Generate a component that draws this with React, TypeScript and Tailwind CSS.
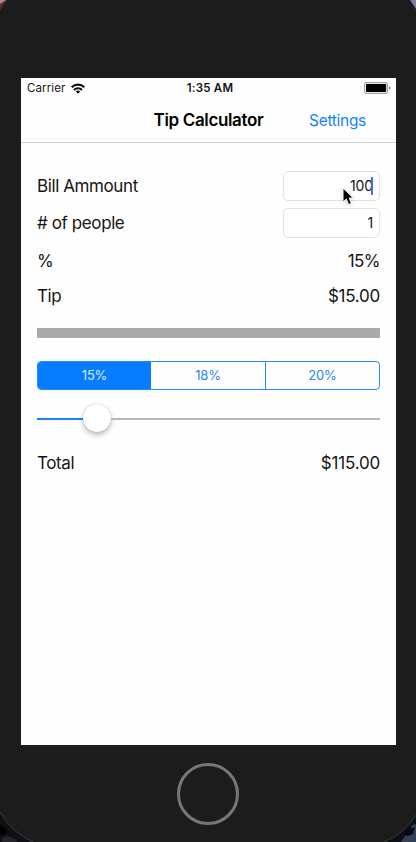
import React from 'react';

function Backdrop() {
  return (
    <svg className="pointer-events-none absolute inset-0" width="416" height="842" viewBox="0 0 416 842" fill="none">
      <path d="M0 0H7Q3 4 0 11Z" fill="#55302f" />
      <path d="M0 0H6L0 4Z" fill="#b98288" />
      <path d="M410 0H416V9Z" fill="#85799a" />
      <path d="M0 812Q12 833 33 842H0Z" fill="#101014" />
      <path d="M0 825l5 2 2 5-4 4-3-2Z" fill="#020203" />
      <path d="M2 838l6-2 7 3 2 3H2Z" fill="#25262b" />
      <path d="M0 812Q12 833 33 842" stroke="#3d3d3f" />
      <path d="M416 815Q404 834 384 842H416Z" fill="#0c0f18" />
      <path d="M416 824l-4 1-2 7-6 5-3 5H416Z" fill="#344058" />
      <path d="M407 826l3 3 5-2-2 7-5 2-4-2Z" fill="#080b12" />
      <path d="M416 815Q404 834 384 842" stroke="#3d3d3f" />
    </svg>
  );
}

function WifiIcon() {
  return (
    <svg width="14" height="11" viewBox="0 0 14 11" fill="none" stroke="#080808" strokeWidth="2.1">
      <path d="M0.7 4.2C4.2 0.7 9.8 0.7 13.3 4.2" />
      <path d="M3 6.9C5.2 4.7 8.8 4.7 11 6.9" />
      <path d="M7 10.7L4.8 8.5Q7 6.6 9.2 8.5Z" fill="#080808" stroke="none" />
    </svg>
  );
}

function BatteryIcon() {
  return (
    <svg width="27" height="12" viewBox="0 0 27 12" fill="none">
      <rect x="0.6" y="0.6" width="23" height="10.8" rx="2.4" stroke="#a2a2a2" strokeWidth="1.1" />
      <rect x="2" y="2" width="20.2" height="8" rx="0.8" fill="#000" />
      <path d="M25 4.1Q26.6 4.8 26.6 6T25 7.9Z" fill="#8c8c8c" />
    </svg>
  );
}

function Pointer() {
  return (
    <svg className="absolute left-[58px] top-[15px] overflow-visible drop-shadow-sm" width="13" height="19" viewBox="0 0 13 19">
      <path d="M1 1V15L4.3 12.1L6.6 17.6L9.4 16.4L7.2 11H11.4Z" fill="#000" stroke="#fff" strokeWidth="1" />
    </svg>
  );
}

function Field({ value, children }: { value: string; children?: React.ReactNode }) {
  return (
    <div className="relative flex h-[30px] w-[97px] items-center justify-end rounded-[5px] border border-[#e2e2e2] bg-white pb-[2px] pr-[6px] text-[14px] tracking-[-0.1px]">
      <span>{value}</span>
      {children}
    </div>
  );
}

function Row({ label, children, className }: { label: string; children: React.ReactNode; className: string }) {
  return (
    <div className={`flex items-center justify-between ${className}`}>
      <span className="pt-[2px]">{label}</span>
      {children}
    </div>
  );
}

export default function App() {
  return (
    <div className="relative h-[842px] w-[416px] overflow-hidden bg-[#1c1c1c] pl-[21px] pt-[78px] font-['Inter','Liberation_Sans',sans-serif] text-[#151515]">
      <Backdrop />
      <div className="h-[667px] w-[375px] bg-[#fefefe]">
        <div className="grid h-5 grid-cols-3 items-center pl-[6px] pr-[5px] text-[12px] leading-5">
          <div className="flex items-center gap-[6px]">
            <span className="text-[11.5px] tracking-[0.1px]">Carrier</span>
            <WifiIcon />
          </div>
          <span className="pl-[2px] text-center text-[11.5px] font-semibold tracking-[0.25px]">1:35 AM</span>
          <div className="flex justify-end"><BatteryIcon /></div>
        </div>
        <div className="grid h-[45px] grid-cols-[1fr_auto_1fr] items-center border-b border-[#cccccc] pt-px">
          <span />
          <h1 className="text-[17px] font-semibold tracking-[-0.35px] text-black">Tip Calculator</h1>
          <button className="justify-self-end pr-[30px] text-[15.5px] tracking-[-0.3px] text-[#1683fd]">Settings</button>
        </div>

        <div className="flex flex-col px-4 pt-7 text-[17px] tracking-[-0.4px]">
          <Row label="Bill Ammount" className="h-[30px]">
            <Field value="100">
              <span className="absolute right-[6px] top-[5px] h-[18px] w-[2px] bg-[#426bf2]" />
              <Pointer />
            </Field>
          </Row>
          <Row label="# of people" className="mt-[7px] h-[30px]"><Field value="1" /></Row>
          <Row label="%" className="mt-[13px] h-5"><span className="pt-[2px] tracking-[-0.55px]">15%</span></Row>
          <Row label="Tip" className="mt-[15px] h-5"><span className="pt-[2px] tracking-[-0.25px]">$15.00</span></Row>
          <div className="mt-[22px] h-[10px] bg-[#aaaaaa]" />
          <div className="mt-[23px] grid h-[29px] grid-cols-[113px_114px_114px] overflow-hidden rounded-[4px] border border-[#2989f8] text-[13px] tracking-[-0.2px] text-[#2487fb]">
            <span className="flex items-center justify-center bg-[#067cff] text-[#d9ebff]">15%</span>
            <span className="flex items-center justify-center">18%</span>
            <span className="flex items-center justify-center border-l border-[#2989f8]">20%</span>
          </div>
          <div className="mt-[14px] flex h-7 items-center">
            <div className="mt-[2px] h-[2px] w-[46px] bg-[#1683fd]" />
            <div className="h-7 w-7 rounded-full bg-white shadow-[0_3px_5px_rgba(0,0,0,0.25),0_0_1px_rgba(0,0,0,0.35)]" />
            <div className="mt-[2px] h-[2px] flex-1 bg-[#b7b7b7]" />
          </div>
          <Row label="Total" className="mt-[21px] h-5"><span className="pt-[2px] tracking-[-0.2px]">$115.00</span></Row>
        </div>
      </div>
      <div className="ml-[156px] mt-[18px] h-[62px] w-[62px] rounded-full border-[3px] border-[#777777]" />
    </div>
  );
}
